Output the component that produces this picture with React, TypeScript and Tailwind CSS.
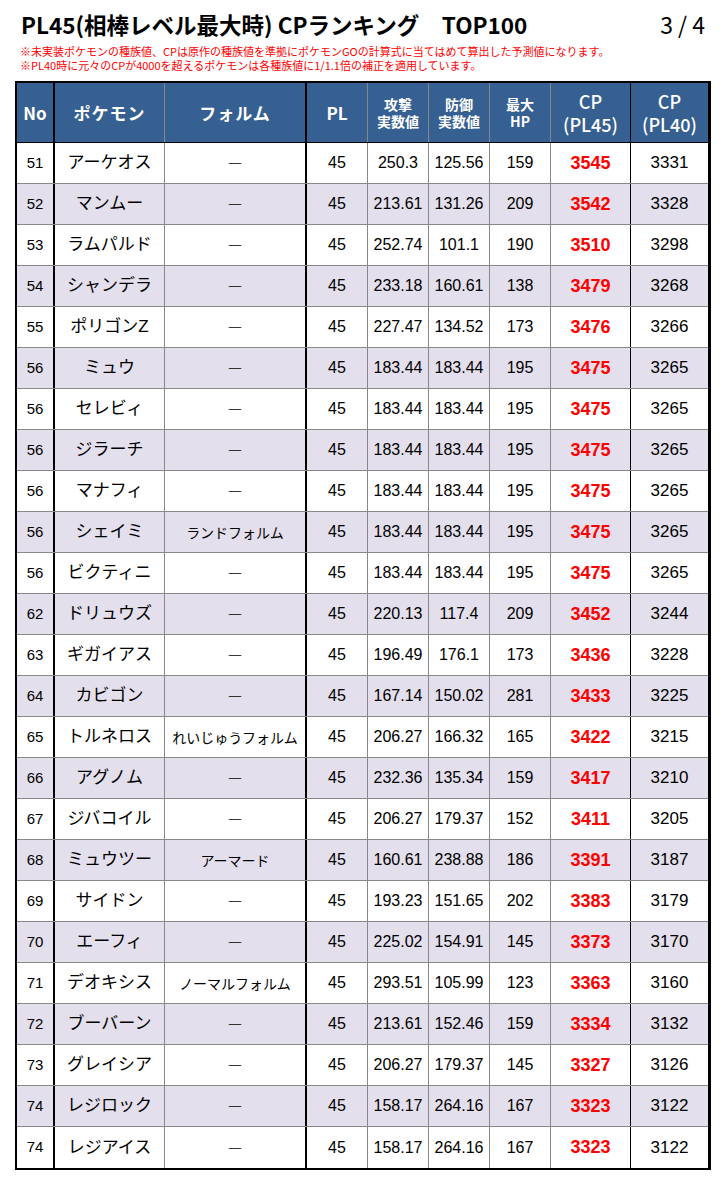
const rows: [string, string, string, string, string, string, string, string][] = [
  ['51', 'アーケオス', '－', '250.3', '125.56', '159', '3545', '3331'],
  ['52', 'マンムー', '－', '213.61', '131.26', '209', '3542', '3328'],
  ['53', 'ラムパルド', '－', '252.74', '101.1', '190', '3510', '3298'],
  ['54', 'シャンデラ', '－', '233.18', '160.61', '138', '3479', '3268'],
  ['55', 'ポリゴンZ', '－', '227.47', '134.52', '173', '3476', '3266'],
  ['56', 'ミュウ', '－', '183.44', '183.44', '195', '3475', '3265'],
  ['56', 'セレビィ', '－', '183.44', '183.44', '195', '3475', '3265'],
  ['56', 'ジラーチ', '－', '183.44', '183.44', '195', '3475', '3265'],
  ['56', 'マナフィ', '－', '183.44', '183.44', '195', '3475', '3265'],
  ['56', 'シェイミ', 'ランドフォルム', '183.44', '183.44', '195', '3475', '3265'],
  ['56', 'ビクティニ', '－', '183.44', '183.44', '195', '3475', '3265'],
  ['62', 'ドリュウズ', '－', '220.13', '117.4', '209', '3452', '3244'],
  ['63', 'ギガイアス', '－', '196.49', '176.1', '173', '3436', '3228'],
  ['64', 'カビゴン', '－', '167.14', '150.02', '281', '3433', '3225'],
  ['65', 'トルネロス', 'れいじゅうフォルム', '206.27', '166.32', '165', '3422', '3215'],
  ['66', 'アグノム', '－', '232.36', '135.34', '159', '3417', '3210'],
  ['67', 'ジバコイル', '－', '206.27', '179.37', '152', '3411', '3205'],
  ['68', 'ミュウツー', 'アーマード', '160.61', '238.88', '186', '3391', '3187'],
  ['69', 'サイドン', '－', '193.23', '151.65', '202', '3383', '3179'],
  ['70', 'エーフィ', '－', '225.02', '154.91', '145', '3373', '3170'],
  ['71', 'デオキシス', 'ノーマルフォルム', '293.51', '105.99', '123', '3363', '3160'],
  ['72', 'ブーバーン', '－', '213.61', '152.46', '159', '3334', '3132'],
  ['73', 'グレイシア', '－', '206.27', '179.37', '145', '3327', '3126'],
  ['74', 'レジロック', '－', '158.17', '264.16', '167', '3323', '3122'],
  ['74', 'レジアイス', '－', '158.17', '264.16', '167', '3323', '3122'],
]

const jp = "font-['Noto_Sans_CJK_JP',sans-serif]"
const num = "font-['Liberation_Sans','Noto_Sans_CJK_JP',sans-serif]"

// 列幅は右罫線込み
const cols = {
  no: 'w-[38px] border-r-2 border-black',
  name: 'w-[110px] border-r border-[#888]',
  form: 'w-[142px] border-r-2 border-black',
  pl: 'w-[61px] border-r border-[#888]',
  atk: 'w-[61px] border-r border-[#888]',
  def: 'w-[61px] border-r border-[#888]',
  hp: 'w-[61px] border-r border-[#888]',
  cp45: 'w-[80px] border-r border-black',
  cp40: 'w-[77px]',
}

function Head() {
  const base = 'flex h-full shrink-0 flex-col items-center justify-center text-center'
  const small = 'text-[14px] leading-[17px]'
  const big = 'text-[18px] leading-[23px]'
  return (
    <div className={`flex h-[60px] border-b border-black bg-[#366092] font-bold text-white ${jp}`}>
      <div className={`${base} ${cols.no} text-[17px]`}>No</div>
      <div className={`${base} ${cols.name} text-[17px] tracking-[1px]`}>ポケモン</div>
      <div className={`${base} ${cols.form} text-[17px] tracking-[1px]`}>フォルム</div>
      <div className={`${base} ${cols.pl} text-[17px]`}>PL</div>
      <div className={`${base} ${cols.atk} ${small}`}>
        <span>攻撃</span>
        <span>実数値</span>
      </div>
      <div className={`${base} ${cols.def} ${small}`}>
        <span>防御</span>
        <span>実数値</span>
      </div>
      <div className={`${base} ${cols.hp} ${small}`}>
        <span>最大</span>
        <span>HP</span>
      </div>
      <div className={`${base} ${cols.cp45} ${big} font-medium`}>
        <span>CP</span>
        <span>(PL45)</span>
      </div>
      <div className={`${base} ${cols.cp40} ${big} font-medium`}>
        <span>CP</span>
        <span>(PL40)</span>
      </div>
    </div>
  )
}

function Row({ r, i, last }: { r: (typeof rows)[number]; i: number; last: boolean }) {
  const [no, name, form, atk, def, hp, cp45, cp40] = r
  const cell = 'flex h-full shrink-0 items-center justify-center'
  const dash = form === '－'
  return (
    <div
      className={`flex h-[41px] text-black ${i % 2 ? 'bg-[#e4dfec]' : 'bg-white'} ${
        last ? '' : 'border-b border-[#888]'
      }`}
    >
      <div className={`${cell} ${cols.no} ${num} text-[15px]`}>{no}</div>
      <div className={`${cell} ${cols.name} ${num} text-[17px]`}>{name}</div>
      <div className={`${cell} ${cols.form} ${jp} ${dash ? 'text-[17px] font-light' : 'text-[14px]'}`}>
        {form}
      </div>
      <div className={`${cell} ${cols.pl} ${num} text-[16px]`}>45</div>
      <div className={`${cell} ${cols.atk} ${num} text-[16px]`}>{atk}</div>
      <div className={`${cell} ${cols.def} ${num} text-[16px]`}>{def}</div>
      <div className={`${cell} ${cols.hp} ${num} text-[16px]`}>{hp}</div>
      <div className={`${cell} ${cols.cp45} ${num} text-[18px] font-bold text-[#ff0000]`}>{cp45}</div>
      <div className={`${cell} ${cols.cp40} ${num} text-[17px]`}>{cp40}</div>
    </div>
  )
}

export default function App() {
  return (
    <div className="min-h-[1184px] w-[727px] bg-white pt-[11px]">
      <div className={`flex items-start justify-between pl-[21px] pr-[22px] ${jp}`}>
        <h1 className="text-[22.5px] leading-[26px] font-bold text-black">
          PL45(相棒レベル最大時) CPランキング　TOP100
        </h1>
        <div className="text-[23px] leading-[26px] text-black">3 / 4</div>
      </div>
      <div className={`mt-[8px] pl-[20px] text-[11px] leading-[13.5px] text-[#ff0000] ${jp}`}>
        <p>※未実装ポケモンの種族値、CPは原作の種族値を準拠にポケモンGOの計算式に当てはめて算出した予測値になります。</p>
        <p>※PL40時に元々のCPが4000を超えるポケモンは各種族値に1/1.1倍の補正を適用しています。</p>
      </div>
      <div className="mt-[9px] ml-[15px] w-[696px] border-t-2 border-r-[3px] border-b-2 border-l-2 border-black">
        <Head />
        {rows.map((r, i) => (
          <Row key={i} r={r} i={i} last={i === rows.length - 1} />
        ))}
      </div>
    </div>
  )
}
